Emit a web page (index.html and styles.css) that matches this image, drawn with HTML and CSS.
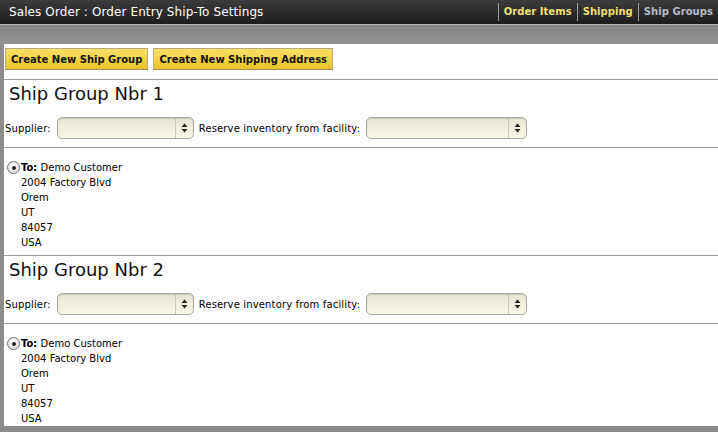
FILE: index.html
```html
<!DOCTYPE html>
<html lang="en">
<head>
  <meta charset="UTF-8">
  <title>Order Entry Ship-To Settings</title>
  <link rel="stylesheet" href="styles.css">
</head>
<body>

  <!-- Screen title bar -->
  <div class="titlebar">
    <div class="title">Sales Order : Order Entry Ship-To Settings</div>
    <ul class="nav">
      <li><a href="#" class="nav-link">Order Items</a></li>
      <li><a href="#" class="nav-link">Shipping</a></li>
      <li><a href="#" class="nav-link current">Ship Groups</a></li>
    </ul>
  </div>
  <div class="subbar"></div>

  <div class="panel">
    <div class="actions">
      <button class="btn">Create New Ship Group</button>
      <button class="btn">Create New Shipping Address</button>
    </div>

    <!-- Ship group 1 -->
    <div class="ship-group">
      <h2>Ship Group Nbr 1</h2>
      <div class="select-row">
        <label>Supplier:</label>
        <span class="select-wrap supplier">
          <select><option></option></select>
          <span class="arrows"><svg width="7" height="10" viewBox="0 0 7 10"><path d="M3.5 0.5 L6.5 4 H0.5 Z M3.5 9.5 L6.5 6 H0.5 Z" fill="#222"/></svg></span>
        </span>
        <label>Reserve inventory from facility:</label>
        <span class="select-wrap facility">
          <select><option></option></select>
          <span class="arrows"><svg width="7" height="10" viewBox="0 0 7 10"><path d="M3.5 0.5 L6.5 4 H0.5 Z M3.5 9.5 L6.5 6 H0.5 Z" fill="#222"/></svg></span>
        </span>
      </div>
      <div class="address">
        <div class="to-line"><span class="radio on"></span><b>To:</b> Demo Customer</div>
        <div>2004 Factory Blvd</div>
        <div>Orem</div>
        <div>UT</div>
        <div>84057</div>
        <div>USA</div>
      </div>
    </div>

    <!-- Ship group 2 -->
    <div class="ship-group">
      <h2>Ship Group Nbr 2</h2>
      <div class="select-row">
        <label>Supplier:</label>
        <span class="select-wrap supplier">
          <select><option></option></select>
          <span class="arrows"><svg width="7" height="10" viewBox="0 0 7 10"><path d="M3.5 0.5 L6.5 4 H0.5 Z M3.5 9.5 L6.5 6 H0.5 Z" fill="#222"/></svg></span>
        </span>
        <label>Reserve inventory from facility:</label>
        <span class="select-wrap facility">
          <select><option></option></select>
          <span class="arrows"><svg width="7" height="10" viewBox="0 0 7 10"><path d="M3.5 0.5 L6.5 4 H0.5 Z M3.5 9.5 L6.5 6 H0.5 Z" fill="#222"/></svg></span>
        </span>
      </div>
      <div class="address">
        <div class="to-line"><span class="radio on"></span><b>To:</b> Demo Customer</div>
        <div>2004 Factory Blvd</div>
        <div>Orem</div>
        <div>UT</div>
        <div>84057</div>
        <div>USA</div>
      </div>
    </div>
  </div>

</body>
</html>
```

FILE: styles.css
```css
body {
  margin: 0;
  background-color: #8c8c8c;
  font-family: "DejaVu Sans", Verdana, sans-serif;
  font-size: 10px;
  color: #000;
}

.titlebar {
  display: flex;
  justify-content: space-between;
  align-items: center;
  height: 24px;
  background: linear-gradient(#3c3c3c, #1c1c1c);
  border-bottom: 1px solid #b4b4b4;
}

.title {
  color: #fff;
  font-size: 12px;
  padding-left: 9px;
  letter-spacing: 0.1px;
}

.nav {
  display: flex;
  list-style: none;
  margin: 0;
  padding: 0;
}

.nav li {
  border-left: 1px solid #9a9a9a;
  padding: 0 5px;
  line-height: 18px;
}

.nav-link {
  color: #f2df74;
  font-weight: bold;
  font-size: 10px;
  letter-spacing: 0.05px;
  text-decoration: none;
}

.nav-link.current {
  color: #b5bcc6;
}

.subbar {
  height: 19px;
  background: linear-gradient(#858585, #929292);
}

.panel {
  background-color: #fff;
  margin-left: 4px;
  padding-top: 4px;
  height: 378px;
  overflow: hidden;
}

.actions {
  display: flex;
  gap: 5px;
  padding-left: 1px;
  padding-bottom: 9px;
}

.btn {
  height: 22px;
  padding: 0 5px;
  border: 1px solid #b7aa78;
  border-bottom-color: #9e9260;
  border-radius: 0;
  background: linear-gradient(#f8df6a, #f2d03e 60%, #e9c125);
  font-family: "DejaVu Sans", Verdana, sans-serif;
  font-size: 10px;
  font-weight: bold;
  color: #111;
  cursor: pointer;
}

.ship-group {
  border-top: 1px solid #9c9c9c;
}

.ship-group h2 {
  margin: 0;
  padding: 3px 0 0 5px;
  font-size: 18px;
  font-weight: normal;
  line-height: 22px;
  color: #111;
}

.select-row {
  display: flex;
  align-items: center;
  height: 22px;
  margin: 12px 0 8px;
  padding-left: 1px;
  border-bottom: 1px solid #9c9c9c;
  padding-bottom: 8px;
  box-sizing: content-box;
}

.select-row label {
  margin-right: 6px;
  letter-spacing: 0.15px;
}

.select-wrap {
  position: relative;
  display: inline-block;
  height: 22px;
  margin-right: 5px;
}

.select-wrap.supplier { width: 137px; }
.select-wrap.facility { width: 161px; }

.select-wrap select {
  appearance: none;
  -webkit-appearance: none;
  width: 100%;
  height: 22px;
  border: 1px solid #a8a8a8;
  border-radius: 5px;
  background: linear-gradient(#e7e4d4, #f1efdf 55%, #f8f6e6);
  box-shadow: inset 0 1px 1px rgba(0, 0, 0, 0.12);
}

.arrows {
  position: absolute;
  right: 1px;
  top: 1px;
  width: 17px;
  height: 20px;
  border-left: 1px solid #c8c6ba;
  display: flex;
  align-items: center;
  justify-content: center;
  pointer-events: none;
}

.address {
  padding: 4px 0 5px 17px;
  line-height: 15px;
  font-size: 10px;
}

.to-line {
  position: relative;
}

.radio {
  position: absolute;
  left: -14px;
  top: 1px;
  width: 11px;
  height: 11px;
  border: 1px solid #6e6e6e;
  border-radius: 50%;
  background: radial-gradient(circle at 50% 35%, #fff, #d8d8d8);
}

.radio.on::after {
  content: "";
  position: absolute;
  left: 3.5px;
  top: 3.5px;
  width: 4px;
  height: 4px;
  border-radius: 50%;
  background: #222;
}
```
